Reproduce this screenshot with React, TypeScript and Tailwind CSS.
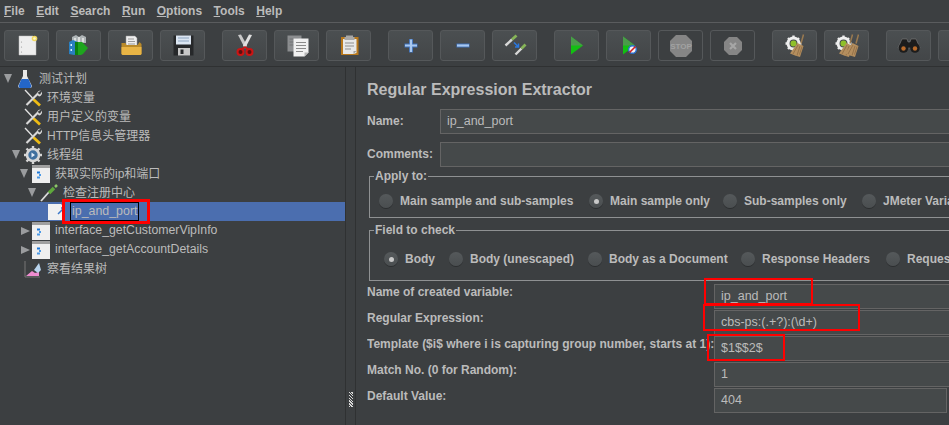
import React from 'react';

const font = { fontFamily: '"Liberation Sans", "Noto Sans CJK SC", sans-serif' };

const Page = () => (
    <svg width="24" height="24" viewBox="0 0 24 24">
        <path d="M4 2h14l3 3v16H4z" fill="#eeeeee" stroke="#bdbdbd" strokeWidth="0.5" />
        <circle cx="6.500" cy="8" r="0.6" fill="#999" />
        <circle cx="6.500" cy="13" r="0.6" fill="#999" />
        <circle cx="6.500" cy="18" r="0.6" fill="#999" />
        <circle cx="19.500" cy="4.500" r="2.800" fill="#f0d860" />
        <circle cx="19.500" cy="4.500" r="1.300" fill="#fff8c8" />
    </svg>
);

const Templates = () => (
    <svg width="24" height="24" viewBox="0 0 24 24">
        <path d="M5 3l4-2 3 2 3-2 4 2v6H5z" fill="#aeb4b6" />
        <path d="M7 4h2v4H7zM11 3h2v5h-2zM15 4h2v4h-2z" fill="#dcdede" />
        <path d="M2 8l4-2 5 2v12l-4 1-5-1z" fill="#2a7fc0" />
        <path d="M3.500 10h1.500v2H3.500zM3.500 15h1.500v2H3.500z" fill="#d8f0ff" />
        <path d="M8 8h7l6 6-5 6-2 1H8z" fill="#1ea51e" />
        <path d="M8 8h3v13H8z" fill="#0c7f10" />
    </svg>
);

const OpenFolder = () => (
    <svg width="24" height="24" viewBox="0 0 24 24">
        <path d="M7 2h9l2 2v9H7z" fill="#eeeeee" stroke="#999" strokeWidth="0.5" />
        <path d="M9 5h6M9 7.500h7M9 10h7" stroke="#9a9a9a" />
        <path d="M2.500 9h4l1 2h11l2-3 2 2v10l-1 1H3.500l-1-1z" fill="#b98a2a" />
        <path d="M2.500 13h20v7l-1 1H3.500l-1-1z" fill="#e8b445" />
    </svg>
);

const Floppy = () => (
    <svg width="24" height="24" viewBox="0 0 24 24">
        <path d="M2.500 1.500h20v20h-20z" fill="#26282a" />
        <path d="M5 1.500h15v9H5z" fill="#dce6f2" />
        <path d="M7 4h11M7 7h11" stroke="#8ea5c0" />
        <path d="M7 14h12v7.500H7z" fill="#c7c7c7" />
        <path d="M9.500 15.500h3v4.500h-3z" fill="#26282a" />
    </svg>
);

const Scissors = () => (
    <svg width="24" height="24" viewBox="0 0 24 24">
        <path d="M5 1l3-.5 6 11-2 3z" fill="#c8c8c8" />
        <path d="M19 1l-3-.5-6 11 2 3z" fill="#e0e0e0" />
        <circle cx="7.500" cy="18" r="3" fill="#5a1010" stroke="#cc1414" strokeWidth="2" />
        <circle cx="16.500" cy="18" r="3" fill="#5a1010" stroke="#cc1414" strokeWidth="2" />
        <path d="M9 15l3-2 3 2" stroke="#cc1414" strokeWidth="1.600" fill="none" />
    </svg>
);

const Copy = () => (
    <svg width="24" height="24" viewBox="0 0 24 24">
        <path d="M2.500 1.500h14v16h-14z" fill="#8b8d8f" />
        <path d="M4.500 5h9M4.500 8h9M4.500 11h9" stroke="#737577" />
        <path d="M8.500 4.500h15v14l-4 4h-11z" fill="#f0f0f0" />
        <path d="M19.500 22.500v-4h4z" fill="#b4b4b4" />
        <path d="M11 8.500h10M11 11.500h10M11 14.500h10M11 17.500h7" stroke="#8a8a8a" />
    </svg>
);

const Paste = () => (
    <svg width="24" height="24" viewBox="0 0 24 24">
        <path d="M4 3h17.500v18H4z" fill="#b8781c" />
        <path d="M6 5h13.500v14l-3 1H6z" fill="#e8e8e8" />
        <path d="M9 1.500h7v1.500h1.500v3h-10V3H9z" fill="#a8a8a8" />
        <path d="M8 9h9M8 12h9M8 15h6" stroke="#8e8e8e" />
        <path d="M16.500 20v-3h3z" fill="#a0a0a0" />
    </svg>
);

const Plus = () => (
    <svg width="24" height="24" viewBox="0 0 24 24">
        <path d="M12 5v13.500M5.500 11.500h13" stroke="#3f70b8" strokeWidth="4" />
        <path d="M12 5.500v12.500M6 11.500h12" stroke="#a8c8f0" strokeWidth="2.200" />
    </svg>
);

const Minus = () => (
    <svg width="24" height="24" viewBox="0 0 24 24">
        <path d="M5.500 11.500h13" stroke="#3f70b8" strokeWidth="4" />
        <path d="M6 11.500h12" stroke="#a8c8f0" strokeWidth="2.200" />
    </svg>
);

const Toggle = () => (
    <svg width="24" height="24" viewBox="0 0 24 24">
        <path d="M2.500 11.500L9 5.500" stroke="#d8d8d8" strokeWidth="2.400" />
        <path d="M9 5.500l4.500-4" stroke="#86b458" strokeWidth="2.800" />
        <path d="M12.500 20.500l6-6" stroke="#d8d8d8" strokeWidth="2.400" />
        <path d="M18.500 14.500l4-4" stroke="#86b458" strokeWidth="2.800" />
        <path d="M11 8.500l4 4M12 13h3.500V9.500" stroke="#2a78e0" strokeWidth="1.500" fill="none" />
    </svg>
);

const Play = () => (
    <svg width="24" height="24" viewBox="0 0 24 24">
        <path d="M6 2.500l12 9-12 9z" fill="#12c012" />
        <path d="M6 2.500l12 9H6z" fill="#4a9a4a" />
    </svg>
);

const PlayNoTimer = () => (
    <svg width="24" height="24" viewBox="0 0 24 24">
        <path d="M6 2.500l12 9-12 9z" fill="#12c012" />
        <path d="M6 2.500l12 9H6z" fill="#4a9a4a" />
        <circle cx="15.500" cy="15.500" r="3.800" fill="#f4f4f4" stroke="#2a6fd0" strokeWidth="1.400" />
        <path d="M12.500 18.500l6-6" stroke="#d02020" strokeWidth="1.600" />
    </svg>
);

const Stop = () => (
    <svg width="24" height="24" viewBox="0 0 24 24">
        <path d="M7 1h10l6 6v10l-6 6H7l-6-6V7z" fill="#858585" />
        <text x="12" y="15" textAnchor="middle" fontSize="8" fontWeight="700" fill="#a2a2a2" fontFamily="Liberation Sans">STOP</text>
    </svg>
);

const Shutdown = () => (
    <svg width="24" height="24" viewBox="0 0 24 24">
        <path d="M8 3h8l5 5v8l-5 5H8l-5-5V8z" fill="#858585" />
        <path d="M9 9l6 6M15 9l-6 6" stroke="#a6a6a6" strokeWidth="2.200" />
    </svg>
);

const Broom = ({ x = 0 }: { x?: number }) => (
    <g transform={`translate(${x} 0)`}>
        <path d="M20.500 .5l-2.500 9" stroke="#9a7a50" strokeWidth="1.500" />
        <path d="M14.500 9l6 3-3.500 11-5-1.500-5-2z" fill="#b48e5e" />
        <path d="M15 11l-5 9M17 12l-3 9.500M19 12.500l-2.500 8" stroke="#876640" strokeWidth="0.700" />
    </g>
);

const Gear = ({ x = 0 }: { x?: number }) => (
    <g transform={`translate(${x} 0)`}>
        <circle cx="10.500" cy="9.500" r="5.500" fill="none" stroke="#eeeeee" strokeWidth="3" />
        <path d="M10.500 1.500v3M10.500 14.500v3M2.500 9.500h3M15.500 9.500h3M5 4l2 2M14 13l2 2M16 4l-2 2M5 15l2-2" stroke="#eeeeee" strokeWidth="2.400" />
        <circle cx="10.500" cy="9.500" r="3" fill="#8fc02a" />
    </g>
);

const Clear = () => (
    <svg width="24" height="24" viewBox="0 0 24 24">
        <Gear />
        <Broom />
    </svg>
);

const ClearAll = () => (
    <svg width="24" height="24" viewBox="0 0 24 24">
        <Gear x={-2} />
        <Broom x={-3} />
        <Broom x={3} />
    </svg>
);

const Binoculars = () => (
    <svg width="24" height="24" viewBox="0 0 24 24">
        <path d="M5 5h5l1 3h2l1-3h5l4 9H1z" fill="#1c1c1c" stroke="#8a8a8a" strokeWidth="0.500" />
        <circle cx="6.500" cy="14" r="4.800" fill="#1c1c1c" />
        <circle cx="18" cy="14" r="4.800" fill="#1c1c1c" />
        <circle cx="6.500" cy="14.500" r="2.200" fill="#b86a2a" />
        <circle cx="18" cy="14.500" r="2.200" fill="#b86a2a" />
    </svg>
);

const Flask = () => (
    <svg width="18" height="18" viewBox="0 0 18 18">
        <path d="M7 0h4v6l5 10-1 2H3l-1-2 5-10z" fill="#e8e8e8" />
        <path d="M5.500 9h7l3 7-1 2H3.500l-1-2z" fill="#2466c8" />
    </svg>
);

const Wrench = () => (
    <svg width="18" height="18" viewBox="0 0 18 18">
        <path d="M1 1l7.500 8" stroke="#e4e4e4" strokeWidth="1.300" />
        <path d="M9 10l7 6.500" stroke="#eebc14" strokeWidth="2.800" />
        <path d="M14 4.500L2.500 16" stroke="#d8d8d8" strokeWidth="2.200" />
        <path d="M17 1.500l-3 2 .5 1.500 1.500.5 2-3a4 4 0 0 1-3 5l-2-2a4 4 0 0 1 4-4z" fill="#d8d8d8" />
    </svg>
);

const ThreadGear = () => (
    <svg width="18" height="18" viewBox="0 0 18 18">
        <circle cx="9" cy="9" r="6" fill="#3f6f9e" stroke="#d6d6d6" strokeWidth="2.600" />
        <path d="M9 0v3M9 15v3M0 9h3M15 9h3M2.500 2.500l2 2M13.500 13.500l2 2M15.500 2.500l-2 2M2.500 15.500l2-2" stroke="#d6d6d6" strokeWidth="2.400" />
        <path d="M7.500 6.500l3.500 2.500-3.500 2.500z" fill="#e6eef8" />
    </svg>
);

const Sampler = () => (
    <svg width="18" height="18" viewBox="0 0 18 18">
        <path d="M0 0h18v18H0z" fill="#efefef" />
        <path d="M0 0h18v3H0z" fill="#a0a0a0" />
        <path d="M5 6.500h3v2H5z" fill="#1e78d8" />
        <path d="M7 9h2v2H7zM5 11.500h3v2H5z" fill="#4c9ae6" />
    </svg>
);

const Pipette = () => (
    <svg width="18" height="18" viewBox="0 0 18 18">
        <path d="M1 17l8-9" stroke="#dcdcdc" strokeWidth="1.800" />
        <path d="M9 9l5-5" stroke="#5fa83c" strokeWidth="3.600" />
        <path d="M15 3l2-2" stroke="#8ec86a" strokeWidth="2.500" />
    </svg>
);

const ExtractorIcon = () => (
    <svg width="18" height="18" viewBox="0 0 18 18">
        <path d="M0 1h13l3 3v13H0z" fill="#f1f1f1" />
        <path d="M10 11l5-5M13 5h3v3" stroke="#3b78c8" strokeWidth="1.500" fill="none" />
    </svg>
);

const ResultTree = () => (
    <svg width="18" height="18" viewBox="0 0 18 18">
        <path d="M1 1v16h15" stroke="#777" strokeWidth="1" fill="none" />
        <path d="M2 16l6-5 3 2 4-1v4z" fill="#ee8cd0" />
        <path d="M10 10l5-7 2 7-3 3z" fill="#b8d4ee" />
    </svg>
);

const toolbar = [
    [Page, Templates, OpenFolder, Floppy],
    [Scissors, Copy, Paste],
    [Plus, Minus, Toggle],
    [Play, PlayNoTimer, Stop, Shutdown],
    [Clear, ClearAll],
    [Binoculars, null],
];

type Node = {
    pad: string;
    arrow?: 'open' | 'closed';
    Icon: React.FC;
    label: string;
    selected?: boolean;
};

const tree: Node[] = [
    { pad: 'pl-[3px]', arrow: 'open', Icon: Flask, label: '测试计划' },
    { pad: 'pl-[11px]', Icon: Wrench, label: '环境变量' },
    { pad: 'pl-[11px]', Icon: Wrench, label: '用户定义的变量' },
    { pad: 'pl-[11px]', Icon: Wrench, label: 'HTTP信息头管理器' },
    { pad: 'pl-[11px]', arrow: 'open', Icon: ThreadGear, label: '线程组' },
    { pad: 'pl-[19px]', arrow: 'open', Icon: Sampler, label: '获取实际的ip和端口' },
    { pad: 'pl-[27px]', arrow: 'open', Icon: Pipette, label: '检查注册中心' },
    { pad: 'pl-[35px]', Icon: ExtractorIcon, label: 'ip_and_port', selected: true },
    { pad: 'pl-[19px]', arrow: 'closed', Icon: Sampler, label: 'interface_getCustomerVipInfo' },
    { pad: 'pl-[19px]', arrow: 'closed', Icon: Sampler, label: 'interface_getAccountDetails' },
    { pad: 'pl-[11px]', Icon: ResultTree, label: '察看结果树' },
];

const menus = ['File', 'Edit', 'Search', 'Run', 'Options', 'Tools', 'Help'];

const applyTo = [
    { label: 'Main sample and sub-samples', width: 'w-[210px]' },
    { label: 'Main sample only', width: 'w-[134px]' },
    { label: 'Sub-samples only', width: 'w-[139px]' },
    { label: 'JMeter Variable Name to use', width: 'w-[220px]' },
];
const fieldToCheck = [
    { label: 'Body', width: 'w-[65px]' },
    { label: 'Body (unescaped)', width: 'w-[139px]' },
    { label: 'Body as a Document', width: 'w-[153px]' },
    { label: 'Response Headers', width: 'w-[145px]' },
    { label: 'Request Headers', width: 'w-[130px]' },
];

const fields = [
    { label: 'Name of created variable:', value: 'ip_and_port', width: 'w-[260px]' },
    { label: 'Regular Expression:', value: 'cbs-ps:(.+?):(\\d+)', width: 'w-[260px]' },
    { label: 'Template ($i$ where i is capturing group number, starts at 1):', value: '$1$$2$', width: 'w-[260px]' },
    { label: 'Match No. (0 for Random):', value: '1', width: 'w-[260px]' },
    { label: 'Default Value:', value: '404', width: 'w-[233px]' },
];

const Radio = ({ label, width, checked }: { label: string; width: string; checked?: boolean }) => (
    <div className={`flex shrink-0 items-center gap-[7px] ${width}`}>
        <span className="flex h-[14px] w-[14px] items-center justify-center rounded-full bg-gradient-to-b from-[#55595b] to-[#4a4e50] shadow-[0_1px_0_#2c2e30]">
            {checked && <span className="h-[5px] w-[5px] rounded-full bg-[#c8c8c8]" />}
        </span>
        <span className="whitespace-nowrap">{label}</span>
    </div>
);

const Group = ({ title, options, checked, inset, height }: { title: string; options: { label: string; width: string }[]; checked: string; inset: string; height: string }) => (
    <fieldset className={`ml-[2px] w-[640px] shrink-0 border border-[#8f9192] ${height}`}>
        <legend className="ml-[4px] px-[1px] leading-[16px]">{title}</legend>
        <div className={`flex items-center ${inset}`}>
            {options.map((o) => (
                <Radio key={o.label} label={o.label} width={o.width} checked={o.label === checked} />
            ))}
        </div>
    </fieldset>
);

const Input = ({ value, width }: { value?: string; width: string }) => (
    <div className={`flex h-[25px] shrink-0 items-center border border-[#646464] bg-[#45494a] px-[6px] text-[12.5px] font-normal ${width}`}>
        {value}
    </div>
);

export default function App() {
    return (
        <div style={font} className="relative flex h-[425px] w-[949px] flex-col overflow-hidden bg-[#3c3f41] text-[12px] text-[#bbbbbb]">
            {/* menu bar */}
            <div className="flex h-[23px] shrink-0 items-center gap-[11.5px] border-b border-[#5a5c5e] pl-1 font-bold">
                {menus.map((m) => (
                    <span key={m}>
                        <span className="underline">{m[0]}</span>
                        {m.slice(1)}
                    </span>
                ))}
            </div>

            {/* toolbar */}
            <div className="flex h-[44px] shrink-0 gap-[17px] border-b border-[#2f3132] pl-1 pt-[7px]">
                {toolbar.map((group, i) => (
                    <div key={i} className="flex gap-[7px]">
                        {group.map((Icon, j) => (
                            <div
                                key={j}
                                className={`flex h-[31px] w-[45px] items-center justify-center rounded-[3px] border border-[#55585a] ${Icon === Stop || Icon === Shutdown ? 'bg-[#3c3f41]' : 'bg-gradient-to-b from-[#4b4f51] to-[#434648]'}`}
                            >
                                {Icon && <Icon />}
                            </div>
                        ))}
                    </div>
                ))}
            </div>

            <div className="flex min-h-0 flex-1">
                {/* test plan tree */}
                <div className="w-[346px] shrink-0 border-r border-[#2f3132] pt-[2px]">
                    {tree.map((n) => (
                        <div key={n.label} className={`flex h-[19px] items-center ${n.pad} ${n.selected ? 'bg-[#4b6eaf]' : ''}`}>
                            <span className="flex w-[13px] shrink-0 items-center pl-[1px]">
                                {n.arrow === 'open' && <span className="h-0 w-0 border-x-[4.5px] border-t-[9px] border-x-transparent border-t-[#9a9c9e]" />}
                                {n.arrow === 'closed' && <span className="ml-[1px] h-0 w-0 border-y-[4.5px] border-l-[9px] border-y-transparent border-l-[#9a9c9e]" />}
                            </span>
                            <n.Icon />
                            {n.selected ? (
                                <span className="ml-1 flex h-[19px] items-center border border-black pl-[1px] pr-[1px] text-[12.4px]">{n.label}</span>
                            ) : (
                                <span className={`ml-[5px] whitespace-nowrap ${n.label.startsWith('interface') ? 'text-[12.3px]' : ''}`}>{n.label}</span>
                            )}
                        </div>
                    ))}
                </div>

                {/* splitter */}
                <div className="flex w-[10px] shrink-0 items-end justify-center border-r border-[#2f3132] pb-[18px]">
                    <span className="h-[15px] w-[4px] bg-[repeating-linear-gradient(45deg,#d8d8d8_0,#d8d8d8_1px,#3c3f41_1px,#3c3f41_2px)]" />
                </div>

                {/* extractor form */}
                <div className="min-w-0 flex-1 overflow-hidden pl-[11px] font-bold">
                    <div className="mt-[12px] h-[22px] whitespace-nowrap text-[16px] leading-[22px]">Regular Expression Extractor</div>
                    <div className="mt-[8px] flex items-center">
                        <span className="w-[73px] shrink-0 pb-[2px]">Name:</span>
                        <Input value="ip_and_port" width="w-[560px]" />
                    </div>
                    <div className="mt-[8px] flex items-center">
                        <span className="w-[73px] shrink-0 pb-[2px]">Comments:</span>
                        <Input width="w-[560px]" />
                    </div>
                    <div className="mt-[1px]">
                        <Group title="Apply to:" options={applyTo} checked="Main sample only" inset="pl-[9px] pt-[8px]" height="h-[50px]" />
                    </div>
                    <div className="mt-[4px]">
                        <Group title="Field to check" options={fieldToCheck} checked="Body" inset="pl-[14px] pt-[12px]" height="h-[59px]" />
                    </div>
                    <div className="mt-[3px] flex flex-col gap-[1px]">
                        {fields.map((f) => (
                            <div key={f.label} className="flex">
                                <span className="w-[347px] shrink-0 overflow-hidden whitespace-nowrap leading-[16px]">{f.label}</span>
                                <Input value={f.value} width={f.width} />
                            </div>
                        ))}
                    </div>
                </div>
            </div>

            {/* red annotation boxes drawn over the shot */}
            <div className="absolute left-[62px] top-[199px] h-[25px] w-[88px] border-[3px] border-[#ff0000]" />
            <div className="absolute left-[704px] top-[278px] h-[27px] w-[109px] border-2 border-[#ff0000]" />
            <div className="absolute left-[703px] top-[304px] h-[27px] w-[157px] border-2 border-[#ff0000]" />
            <div className="absolute left-[707px] top-[334px] h-[27px] w-[78px] border-2 border-[#ff0000]" />
        </div>
    );
}
